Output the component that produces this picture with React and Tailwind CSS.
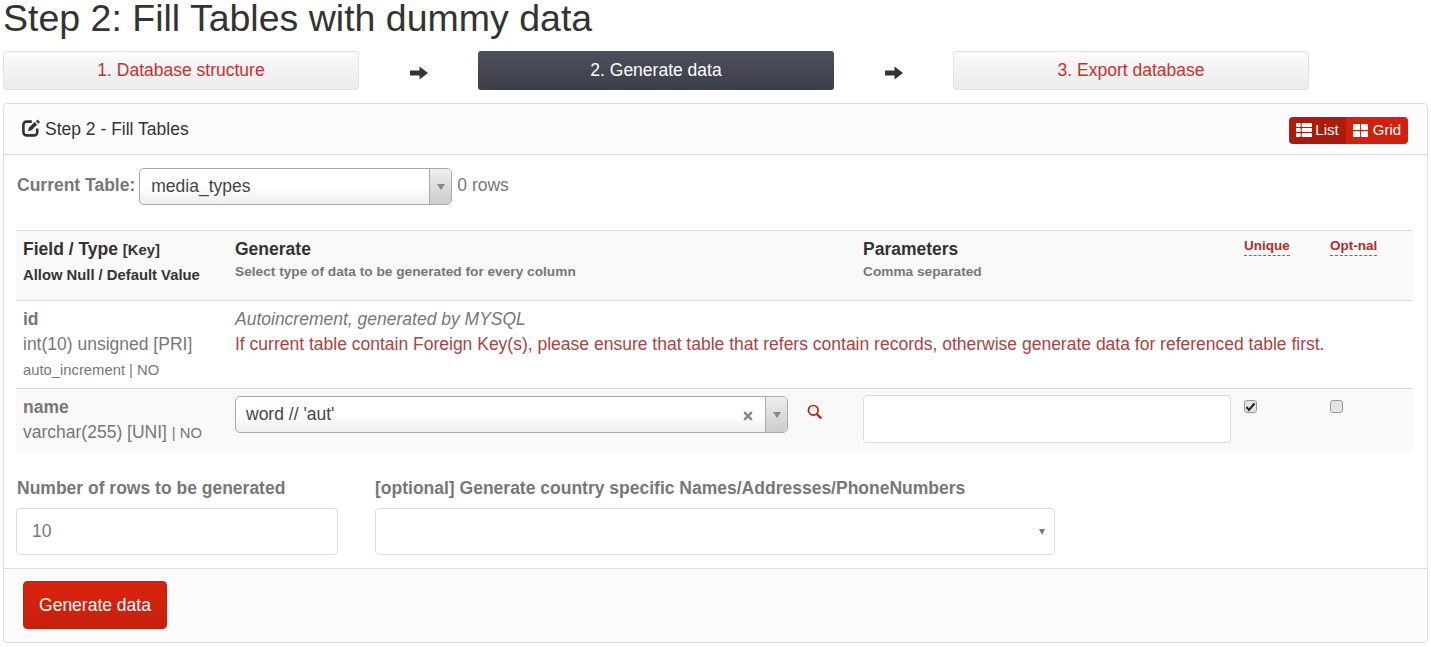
import React from 'react';
import { FaThList, FaThLarge } from 'react-icons/fa';

const ArrowIcon = () => (
  <svg width="18" height="14" viewBox="0 0 18 14" className="text-[#333]">
    <path d="M0 4.6h9.5V.6L18 7l-8.5 6.4V9.4H0z" fill="currentColor" />
  </svg>
);

const EditIcon = () => (
  <svg width="19" height="18" viewBox="0 0 19 18" fill="none" stroke="#333">
    <path d="M9.8 2.6H4.6A3.2 3.2 0 0 0 1.4 5.8v7.4a3.2 3.2 0 0 0 3.2 3.2H12a3.2 3.2 0 0 0 3.2-3.2V9.6" strokeWidth="2.6" />
    <path d="M6.4 11.8l.8-3.1 5.4-5.4 2.3 2.3-5.4 5.4z" fill="#333" strokeWidth="0.6" />
    <path d="M15.6 .8l2.2 2.2-1.5 1.5-2.2-2.2z" fill="#333" strokeWidth="0.4" />
  </svg>
);

const SearchIcon = () => (
  <svg width="16" height="16" viewBox="0 0 16 16" fill="none" stroke="#bb1a0a">
    <circle cx="6.3" cy="6.3" r="4.8" strokeWidth="1.7" />
    <path d="M9.8 10l4.4 4.6" strokeWidth="2.2" />
  </svg>
);

const ClearIcon = () => (
  <svg width="10" height="10" viewBox="0 0 10 10">
    <path d="M1.2 1.2l7.6 7.6M8.8 1.2L1.2 8.8" stroke="#888" strokeWidth="2.6" />
  </svg>
);

const Step = ({ label, active }) => (
  <div
    className={`w-[356px] h-[39px] rounded-[3px] flex items-center justify-center text-[17.5px] ${
      active
        ? 'bg-gradient-to-b from-[#4c505c] to-[#3c3f49] text-white'
        : 'bg-gradient-to-b from-[#fafafa] to-[#ececec] border border-[#e2e2e2] text-[#c9302c]'
    }`}
  >
    {label}
  </div>
);

const Caret = () => (
  <div className="w-0 h-0 border-x-[4px] border-x-transparent border-t-[6px] border-t-[#888]" />
);

const SelectBox = ({ className, children }) => (
  <div className={`flex h-[37px] rounded-[5px] border border-[#aaa] bg-gradient-to-b from-white from-50% to-[#eeeeee] text-[17.5px] text-[#444] ${className}`}>
    {children}
    <div className="w-[22px] border-l border-[#aaa] rounded-r-[5px] bg-gradient-to-b from-[#eeeeee] to-[#cccccc] flex items-center justify-center">
      <Caret />
    </div>
  </div>
);

const Checkbox = ({ checked }) => (
  <div className="w-[13px] h-[13px] mt-[5px] rounded-[3px] border border-[#999] bg-[#e4e4e4] flex items-center justify-center">
    {checked && (
      <svg width="11" height="10" viewBox="0 0 11 10">
        <path d="M1.5 5l2.5 3L9.5 1.5" fill="none" stroke="#222" strokeWidth="2" />
      </svg>
    )}
  </div>
);

const rowGrid = 'grid grid-cols-[212px_628px_381px_86px_1fr] px-[7px]';

const App = () => {
  return (
    <div className="bg-white h-[647px] overflow-hidden px-[3px] text-[#333] font-['Liberation_Sans',Arial,sans-serif]">
      <h1 className="text-[37.5px] leading-[37px] h-[51px] whitespace-nowrap">Step 2: Fill Tables with dummy data</h1>

      <div className="flex items-center w-[1306px] justify-between">
        <Step label="1. Database structure" />
        <div className="pt-[5px]"><ArrowIcon /></div>
        <Step label="2. Generate data" active />
        <div className="pt-[5px]"><ArrowIcon /></div>
        <Step label="3. Export database" />
      </div>

      <div className="mt-[13px] w-[1425px] h-[540px] border border-[#dddddd] rounded-[4px] flex flex-col">
        <div className="h-[51px] shrink-0 bg-[#fcfcfc] border-b border-[#dddddd] rounded-t-[4px] flex items-center justify-between pl-[18px] pr-[19px] pt-[1px]">
          <div className="flex items-center gap-[4px] text-[17.5px] leading-none">
            <span className="-mt-[3px]"><EditIcon /></span>
            <span>Step 2 - Fill Tables</span>
          </div>
          <div className="flex h-[27px] mt-[1px] rounded-[4px] overflow-hidden text-[15px] text-white">
            <div className="w-[57px] bg-gradient-to-b from-[#b01c0a] to-[#a81a0c] flex items-center justify-center gap-[3px]">
              <FaThList size={16} /> <span>List</span>
            </div>
            <div className="w-[62px] bg-[#d2200c] flex items-center justify-center gap-[5px]">
              <FaThLarge size={15} /> <span>Grid</span>
            </div>
          </div>
        </div>

        <div className="flex-1 bg-white pl-[12px] pr-[14px] pt-[13px]">
          <div className="flex items-start h-[62px]">
            <span className="font-bold text-[#777] text-[17.5px] leading-[24px] mt-[5px] ml-[1px] mr-[4px]">Current Table:</span>
            <SelectBox className="w-[313px]">
              <div className="flex-1 pl-[11px] leading-[35px]">media_types</div>
            </SelectBox>
            <span className="text-[#777] text-[17.5px] leading-[24px] ml-[5px] mt-[5px]">0 rows</span>
          </div>

          <div className={`${rowGrid} h-[71px] bg-[#f9f9f9] border-t border-b border-[#dddddd] pt-[7px]`}>
            <div>
              <div className="font-bold text-[17.5px] leading-[23px] whitespace-nowrap">Field / Type <span className="text-[14.8px]">[Key]</span></div>
              <div className="font-bold text-[14.8px] leading-[26px] whitespace-nowrap">Allow Null / Default Value</div>
            </div>
            <div>
              <div className="font-bold text-[17.5px] leading-[23px]">Generate</div>
              <div className="font-bold text-[13.7px] leading-[21px] text-[#777]">Select type of data to be generated for every column</div>
            </div>
            <div>
              <div className="font-bold text-[17.5px] leading-[23px]">Parameters</div>
              <div className="font-bold text-[13.7px] leading-[21px] text-[#777]">Comma separated</div>
            </div>
            <div className="-mt-[5px]"><span className="font-bold text-[13.5px] text-[#b52b27] border-b border-dashed border-[#337ab7] leading-[16px] pb-[1px] inline-block">Unique</span></div>
            <div className="-mt-[5px]"><span className="font-bold text-[13.5px] text-[#b52b27] border-b border-dashed border-[#337ab7] leading-[16px] pb-[1px] inline-block">Opt-nal</span></div>
          </div>

          <div className={`${rowGrid} h-[88px] border-b border-[#dddddd] pt-[7px] text-[#777]`}>
            <div>
              <div className="font-bold text-[17.5px] leading-[23px]">id</div>
              <div className="text-[17.5px] leading-[26px] whitespace-nowrap">int(10) unsigned [PRI]</div>
              <div className="text-[14.8px] leading-[26px] whitespace-nowrap">auto_increment | NO</div>
            </div>
            <div className="col-span-4">
              <div className="italic text-[17.5px] leading-[23px]">Autoincrement, generated by MYSQL</div>
              <div className="text-[17.5px] leading-[26px] text-[#a94442] whitespace-nowrap">If current table contain Foreign Key(s), please ensure that table that refers contain records, otherwise generate data for referenced table first.</div>
            </div>
          </div>

          <div className={`${rowGrid} h-[63px] bg-[#f9f9f9] pt-[6px] text-[#777]`}>
            <div className="pt-[1px]">
              <div className="font-bold text-[17.5px] leading-[23px]">name</div>
              <div className="text-[17.5px] leading-[26px] whitespace-nowrap">varchar(255) [UNI] <span className="text-[14.8px]">| NO</span></div>
            </div>
            <div className="flex items-start">
              <SelectBox className="w-[553px] mt-[1px]">
                <div className="flex-1 pl-[10px] leading-[35px] relative">
                  word // 'aut'
                  <span className="absolute right-[12px] top-[14px] flex"><ClearIcon /></span>
                </div>
              </SelectBox>
              <span className="ml-[19px] mt-[9px]"><SearchIcon /></span>
            </div>
            <div><div className="w-[368px] h-[48px] bg-white border border-[#dddddd] rounded-[4px]" /></div>
            <div><Checkbox checked /></div>
            <div><Checkbox /></div>
          </div>

          <div className="flex mt-[25px] gap-[37px]">
            <div className="w-[322px]">
              <div className="font-bold text-[17.5px] leading-[23px] text-[#777] mb-[8px] ml-[1px] whitespace-nowrap">Number of rows to be generated</div>
              <div className="h-[47px] border border-[#dddddd] rounded-[4px] px-[15px] leading-[45px] text-[17.5px] text-[#777]">10</div>
            </div>
            <div className="w-[680px]">
              <div className="font-bold text-[17.5px] leading-[23px] text-[#777] mb-[8px] whitespace-nowrap">[optional] Generate country specific Names/Addresses/PhoneNumbers</div>
              <div className="h-[47px] border border-[#dddddd] rounded-[4px] flex items-center justify-end pr-[9px]">
                <div className="w-0 h-0 border-x-[3px] border-x-transparent border-t-[6px] border-t-[#777]" />
              </div>
            </div>
          </div>
        </div>

        <div className="h-[74px] shrink-0 bg-[#fcfcfc] border-t border-[#dddddd] rounded-b-[4px] pl-[19px] pt-[12px]">
          <button className="w-[144px] h-[48px] rounded-[4px] border border-[#c5200c] bg-gradient-to-b from-[#da230c] to-[#c5210e] text-white text-[17.5px]">Generate data</button>
        </div>
      </div>
    </div>
  );
};

export default App;
